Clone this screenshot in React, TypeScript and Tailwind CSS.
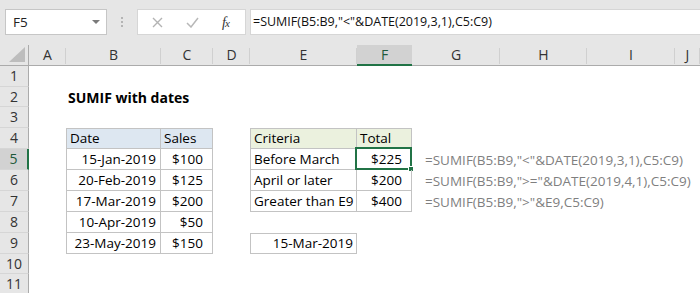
import type { ReactNode } from 'react'

const cols = ['A', 'B', 'C', 'D', 'E', 'F', 'G', 'H', 'I', 'J']
const rowHeights = ['h-[21px]', 'h-[20px]', 'h-[21px]', 'h-[21px]', 'h-[21px]', 'h-[21px]', 'h-[21px]', 'h-[21px]', 'h-[21px]', 'h-[20px]', 'h-[21px]']

type CellDef = { text?: ReactNode; cls?: string; selected?: boolean }

const tb = 'border-[#c3c3c3]'
const blueHead = `bg-[#dde7f1] border-t border-b border-r ${tb} pl-[3px]`
const greenHead = `bg-[#ebf1de] border-t border-b border-r ${tb} pl-[3px]`
const dateCell = `justify-end pr-[4px] border-b border-r border-l ${tb}`
const moneyCell = `justify-end pr-[9px] border-b border-r ${tb}`
const critCell = `pl-[3px] border-b border-r border-l ${tb}`
const formula = 'text-[#7f7f7f] text-[12px] pl-[13px]'

const data: Record<number, Record<string, CellDef>> = {
  2: { B: { text: 'SUMIF with dates', cls: 'font-bold pl-[2px] text-[14px]' } },
  4: {
    B: { text: 'Date', cls: `${blueHead} border-l` },
    C: { text: 'Sales', cls: blueHead },
    E: { text: 'Criteria', cls: `${greenHead} border-l` },
    F: { text: 'Total', cls: greenHead },
  },
  5: {
    B: { text: '15-Jan-2019', cls: dateCell },
    C: { text: '$100', cls: moneyCell },
    E: { text: 'Before March', cls: critCell },
    F: { text: '$225', cls: moneyCell, selected: true },
    G: { text: '=SUMIF(B5:B9,"<"&DATE(2019,3,1),C5:C9)', cls: formula },
  },
  6: {
    B: { text: '20-Feb-2019', cls: dateCell },
    C: { text: '$125', cls: moneyCell },
    E: { text: 'April or later', cls: critCell },
    F: { text: '$200', cls: moneyCell },
    G: { text: '=SUMIF(B5:B9,">="&DATE(2019,4,1),C5:C9)', cls: formula },
  },
  7: {
    B: { text: '17-Mar-2019', cls: dateCell },
    C: { text: '$200', cls: moneyCell },
    E: { text: 'Greater than E9', cls: `${critCell} text-[13.2px]` },
    F: { text: '$400', cls: moneyCell },
    G: { text: '=SUMIF(B5:B9,">"&E9,C5:C9)', cls: formula },
  },
  8: {
    B: { text: '10-Apr-2019', cls: dateCell },
    C: { text: '$50', cls: moneyCell },
  },
  9: {
    B: { text: '23-May-2019', cls: dateCell },
    C: { text: '$150', cls: moneyCell },
    E: { text: '15-Mar-2019', cls: `justify-end pr-[3px] border ${tb}` },
  },
}

function Toolbar() {
  return (
    <div className="h-[45px] bg-[#e6e6e6] flex items-start pt-[9px] pl-[5px]">
      <div className="w-[102px] h-[26px] bg-white border border-[#c6c6c6] flex items-center justify-between pl-[7px] pr-[6px]">
        <span className="text-[13.5px] text-[#222]">F5</span>
        <svg width="8" height="5" viewBox="0 0 8 5"><path d="M0 0h8L4 4z" fill="#7a7a7a" /></svg>
      </div>
      <div className="w-[30px] h-[26px] flex flex-col items-center justify-center gap-[2px]">
        <span className="w-[2px] h-[2px] bg-[#b4b4b4]" />
        <span className="w-[2px] h-[2px] bg-[#b4b4b4]" />
        <span className="w-[2px] h-[2px] bg-[#b4b4b4]" />
      </div>
      <div className="w-[109px] h-[26px] bg-white border border-[#d6d6d6] flex items-center">
        <svg className="ml-[14px]" width="11" height="11" viewBox="0 0 11 11"><path d="M1 1l9 9M10 1l-9 9" stroke="#b3b3b3" strokeWidth="1.4" /></svg>
        <svg className="ml-[23px]" width="13" height="11" viewBox="0 0 13 11"><path d="M1 6l4 4 7-9" stroke="#b8b8b8" strokeWidth="1.5" fill="none" /></svg>
        <span className="ml-[23px] text-[14px] italic text-[#333] font-['Liberation_Serif',serif] tracking-[-1px]">f<span className="text-[11px]">x</span></span>
      </div>
      <div className="flex-1 ml-[4px] h-[26px] bg-white border border-[#d6d6d6] border-r-0 flex items-center pl-[2px] text-[12.5px] text-[#111] whitespace-nowrap">
        =SUMIF(B5:B9,"&lt;"&amp;DATE(2019,3,1),C5:C9)
      </div>
    </div>
  )
}

export default function App() {
  return (
    <div className="w-[700px] h-[293px] overflow-hidden bg-white font-['Open_Sans',sans-serif] text-black">
      <Toolbar />
      <div className="grid grid-cols-[29px_37px_95px_52px_37px_107px_55px_88px_87px_88px_1fr]">
        <div className="h-[21px] bg-[#e6e6e6] border-b border-r border-[#ababab] flex items-end justify-end pr-[3px] pb-[3px]">
          <svg width="16" height="15" viewBox="0 0 16 15"><path d="M16 0v15H0z" fill="#bdbdbd" /></svg>
        </div>
        {cols.map((c) => (
          <div
            key={c}
            className={
              c === 'F'
                ? 'h-[21px] bg-[#d2d2d2] border-b-2 border-[#217346] flex items-center justify-center text-[14px] text-[#1e5a3a] leading-none'
                : 'h-[21px] bg-[#e6e6e6] border-b border-[#ababab] flex items-center justify-center text-[14px] text-[#333] leading-none relative'
            }
          >
            {c}
            {c !== 'F' && <span className="absolute right-0 top-[3px] bottom-[1px] w-px bg-[#d0d0d0]" />}
          </div>
        ))}
        {rowHeights.map((h, i) => {
          const r = i + 1
          const row = data[r] || {}
          return [
            <div
              key={`h${r}`}
              className={`${h} flex items-center justify-center text-[14px] leading-none ${
                r === 5
                  ? 'bg-[#d2d2d2] border-r-2 border-[#217346] text-[#1e5a3a]'
                  : 'bg-[#e6e6e6] border-r border-[#ababab] text-[#333]'
              } border-b border-b-[#d6d6d6]`}
            >
              {r}
            </div>,
            ...cols.map((c) => {
              const cell = row[c]
              return (
                <div
                  key={`${c}${r}`}
                  className={`${h} relative flex items-end text-[13.5px] leading-[19px] whitespace-nowrap ${cell?.cls ?? ''}`}
                >
                  {cell?.text}
                  {cell?.selected && (
                    <span className="absolute -left-[2px] -top-[2px] -right-[1px] -bottom-[1px] border-2 border-[#217346]">
                      <span className="absolute -right-[4px] -bottom-[4px] w-[6px] h-[6px] bg-[#217346] border border-white" />
                    </span>
                  )}
                </div>
              )
            }),
          ]
        })}
      </div>
    </div>
  )
}
